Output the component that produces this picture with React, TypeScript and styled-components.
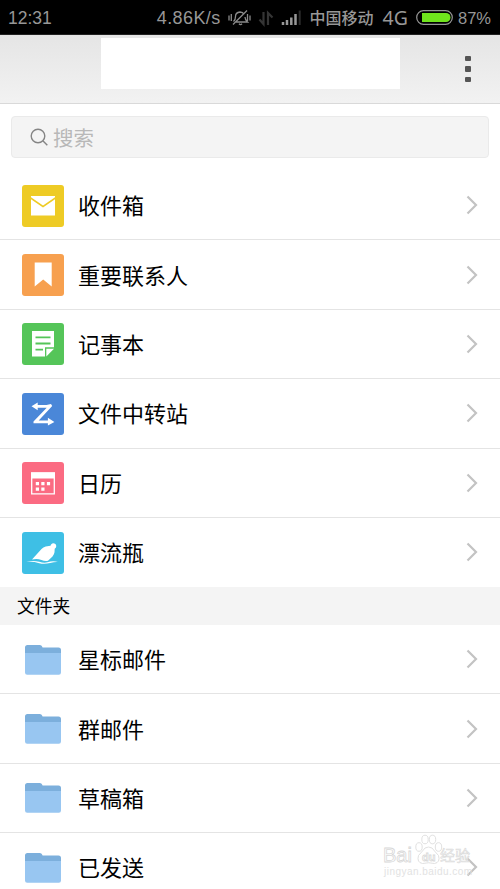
import React from "react";
import styled, { createGlobalStyle } from "styled-components";

const GlobalStyle = createGlobalStyle`
  * { box-sizing: border-box; }
  html, body { margin: 0; padding: 0; background: #fff; }
  body { overflow: hidden; }
`;

const Screen = styled.div`
  position: relative;
  width: 500px;
  height: 889px;
  overflow: hidden;
  background: #fff;
  color: #000;
  font-family: "Liberation Sans", "Noto Sans CJK SC", sans-serif;
`;

const StatusBar = styled.div`
  display: flex;
  align-items: center;
  height: 35px;
  padding: 1px 9px 0 8px;
  background: #000;
  color: #979797;
  border-bottom: 1px solid #222;
`;

const StatusText = styled.span<{ $size: number; $gap?: number; $track?: number; $font?: string }>`
  font-family: ${(p) => p.$font ?? '"Liberation Sans", "Noto Sans CJK SC", sans-serif'};
  font-size: ${(p) => p.$size}px;
  line-height: 34px;
  letter-spacing: ${(p) => p.$track ?? 0}px;
  margin-left: ${(p) => p.$gap ?? 0}px;
  white-space: nowrap;
`;

const Carrier = styled.span`
  margin-top: -2px;
  font: 500 16px/34px "Noto Sans CJK SC", sans-serif;
`;

const StatusGroup = styled.div`
  display: flex;
  align-items: center;
  margin-left: auto;
`;

const StatusIcons = styled.svg`
  display: block;
  width: 74px;
  height: 20px;
  margin: 0 8px 0 7px;
`;

const Battery = styled.svg`
  display: block;
  width: 37px;
  height: 15px;
  margin: 0 5px 0 8px;
`;

const Header = styled.header`
  display: flex;
  align-items: flex-start;
  height: 69px;
  padding: 3px 29px 0 101px;
  background: linear-gradient(#e5e5e5, #f2f2f2);
  border-bottom: 1px solid #d9d9d9;
`;

const TitleBlank = styled.div`
  width: 299px;
  height: 51px;
  background: #fff;
`;

const MenuButton = styled.button`
  display: flex;
  flex-direction: column;
  gap: 5px;
  margin: 17.5px 0 0 auto;
  padding: 0;
  border: 0;
  background: none;
`;

const MenuDot = styled.span`
  width: 6px;
  height: 5.5px;
  border-radius: 1px;
  background: #555;
`;

const SearchBox = styled.div`
  display: flex;
  align-items: center;
  height: 42px;
  margin: 12px 11px 13px;
  padding-left: 18px;
  border: 1px solid #eaeaea;
  border-radius: 4px;
  background: #f4f4f4;
  color: #b8b8b8;
  font: 20.5px/40px "Noto Sans CJK SC", sans-serif;
`;

const SearchIcon = styled.svg`
  width: 18px;
  height: 18px;
  margin-right: 5px;
`;

const Row = styled.div`
  display: flex;
  align-items: center;
  height: 69.4px;
  padding: 0 22px;
  border-bottom: 1px solid #e4e4e4;
  &:last-child { border-bottom-color: transparent; }
`;

const IconTile = styled.svg`
  flex: none;
  width: 42px;
  height: 42px;
  margin-top: 1px;
`;

const Label = styled.span`
  flex: 1;
  margin: -2px 0 0 14px;
  font: 22px/32px "Noto Sans CJK SC", sans-serif;
`;

const Chevron = styled.svg`
  width: 12px;
  height: 20px;
`;

const SectionTitle = styled.div`
  height: 37.6px;
  padding-left: 17px;
  background: #f4f4f4;
  font: 17.8px/36px "Noto Sans CJK SC", sans-serif;
`;

const Watermark = styled.svg`
  position: absolute;
  left: 380px;
  top: 832px;
  width: 96px;
  height: 46px;
`;

const Folder = () => (
  <>
    <path d="M3 8.5a2.5 2.5 0 0 1 2.500-2.500h12.500q2 0 2.600 2.500h15.900a2.500 2.500 0 0 1 2.500 2.500v6H3z" fill="#7cafdc" />
    <path d="M3 14h36v19.500a2.200 2.200 0 0 1-2.200 2.200H5.200A2.200 2.200 0 0 1 3 33.500z" fill="#98c6f1" />
  </>
);

const Tile = ({ color }: { color: string }) => <rect width="42" height="42" rx="3" fill={color} />;

const Mail = () => (
  <>
    <Tile color="#eecb25" />
    <path d="M9 11h24v1.300L21 20.500 9 12.300z" fill="#fff" />
    <path d="M9 14.200l12 8.200 12-8.200V30.500H9z" fill="#fff" />
  </>
);

const Bookmark = () => (
  <>
    <Tile color="#f7a04f" />
    <path d="M12.700 8.500h17V32.500L21.200 25.500 12.700 32.500z" fill="#fff" />
  </>
);

const Note = () => (
  <>
    <Tile color="#55c559" />
    <path d="M10 8h22v16.300h-9V33.500H10z" fill="#fff" />
    <path d="M24.300 25.700H32L24.300 33.500z" fill="#fff" />
    <path d="M13.500 14.300h15M13.500 20.500h15M13.500 26.600h7.500" stroke="#55c559" strokeWidth="1.800" />
  </>
);

const Transfer = () => (
  <>
    <Tile color="#4a87d8" />
    <path d="M9.500 13.200l6.200-3.800v2.500h8.800l4.500-.9 1.200 1.900-13.500 14.500h9.200v-2.600l6.500 4.100-6.500 3.700v-2.400H11.500v-1.800l13.200-13.700h-9v2.500z" fill="#fff" />
  </>
);

const Calendar = () => (
  <>
    <Tile color="#fb6b82" />
    <path d="M9.700 11h22.600v20.800H9.700z" fill="none" stroke="#fff" strokeWidth="1.300" />
    <path d="M9 10.500h24v6H9z" fill="#fff" />
    <path d="M13.800 20h3.200v3.200h-3.200zM19.300 20h3.200v3.200h-3.200zM24.900 20h3.200v3.200h-3.200zM13.800 25.500h3.200v3.200h-3.200zM19.300 25.500h3.200v3.200h-3.200z" fill="#fff" />
  </>
);

const Bottle = () => (
  <>
    <Tile color="#3ebfe5" />
    <path d="M10 27.500L19.500 17q1.800-2 4.200-2.500l4.800-.8a2.900 2.900 0 1 1 4.200 3l-.2 3.500q-.3 2.400-2 4.200l-4.500 4.300q-3.500.6-6.500-.8-4.500-1.700-9.500-.4z" fill="#fff" />
    <path d="M4.200 30q7-2 13-.2t11-.2q4-.7 7.700.4-3.700-.2-7.700 1-6 1.500-11 .2-6-1.800-13-1.200z" fill="#fff" />
  </>
);

const mailboxes = [
  { name: "收件箱", Icon: Mail },
  { name: "重要联系人", Icon: Bookmark },
  { name: "记事本", Icon: Note },
  { name: "文件中转站", Icon: Transfer },
  { name: "日历", Icon: Calendar },
  { name: "漂流瓶", Icon: Bottle },
];

const folders = ["星标邮件", "群邮件", "草稿箱", "已发送"].map((name) => ({ name, Icon: Folder }));

const List = ({ items }: { items: { name: string; Icon: React.FC }[] }) => (
  <div>
    {items.map(({ name, Icon }) => (
      <Row key={name}>
        <IconTile viewBox="0 0 42 42"><Icon /></IconTile>
        <Label>{name}</Label>
        <Chevron viewBox="0 0 12 20" fill="none">
          <path d="M1.500 1.500L10 10l-8.500 8.500" stroke="#c3c3c3" strokeWidth="2.200" />
        </Chevron>
      </Row>
    ))}
  </div>
);

export default function App() {
  return (
    <>
      <GlobalStyle />
      <Screen>
        <StatusBar>
          <StatusText $size={17.5}>12:31</StatusText>
          <StatusGroup>
            <StatusText $size={18} $track={0.4}>4.86K/s</StatusText>
            <StatusIcons viewBox="0 0 74 20" fill="none">
              <path d="M5.500 13.500q2-1.500 2-5 0-4 4.500-4.500 3 .2 4 2.500M17 9q0 3 2.500 5H8M11 15.800q1.500 1.600 3 0M5 16.500L19 2.500M1 7.500v5M3.300 6v7M19.500 6v7M22 7.500v5" stroke="#8b8b8b" strokeWidth="1.300" />
              <path d="M35.500 4v12l-4-4.500M40 17V5l4.500 4.500" stroke="#353535" strokeWidth="2.200" />
              <path d="M55 14v3M59 12v5M63.300 9.500V17M67.500 6v11" stroke="#989898" strokeWidth="2.500" />
              <path d="M71.700 2.500V17" stroke="#2c2c2c" strokeWidth="2" />
            </StatusIcons>
            <Carrier>中国移动</Carrier>
            <StatusText $size={19.5} $gap={9} $font={'"Noto Sans", sans-serif'}>4G</StatusText>
            <Battery viewBox="0 0 37 15">
              <rect x=".7" y=".7" width="35.600" height="13.600" rx="6.800" fill="none" stroke="#979797" strokeWidth="1.200" />
              <path d="M6 3h24a4.500 4.500 0 0 1 0 9H6z" fill="#70e51d" />
            </Battery>
            <StatusText $size={16.5}>87%</StatusText>
          </StatusGroup>
        </StatusBar>
        <Header>
          <TitleBlank />
          <MenuButton aria-label="菜单"><MenuDot /><MenuDot /><MenuDot /></MenuButton>
        </Header>
        <SearchBox>
          <SearchIcon viewBox="0 0 18 18" fill="none" stroke="#858585" strokeWidth="1.400">
            <circle cx="8" cy="8" r="6.800" />
            <path d="M12.800 12.800l4.500 4.500" />
          </SearchIcon>
          搜索
        </SearchBox>
        <List items={mailboxes} />
        <SectionTitle>文件夹</SectionTitle>
        <List items={folders} />
        <Watermark viewBox="0 0 96 46">
          <g fill="#fff" stroke="#d8d8d8" strokeWidth=".8">
            <text x="3" y="30" fontFamily="Liberation Sans" fontWeight="400" fontSize="20">Bai</text>
            <ellipse cx="39" cy="15" rx="3.200" ry="4.300" />
            <ellipse cx="45" cy="7.500" rx="3.200" ry="4.300" />
            <ellipse cx="52.500" cy="7.500" rx="3.200" ry="4.300" />
            <ellipse cx="58.500" cy="15" rx="3.200" ry="4.300" />
            <path d="M48.500 15q4 0 6 4l4 4.500q2 7-4 8-6-1.500-12 0-6-1-4-8l4-4.500q2-4 6-4z" />
            <text x="42" y="29" fontFamily="Liberation Sans" fontWeight="700" fontSize="11">du</text>
            <text x="60" y="29" fontFamily="Noto Sans CJK SC" fontWeight="400" fontSize="15" strokeWidth=".5" fill="#f2f2f2">经验</text>
          </g>
          <text x="4" y="43" fontFamily="Liberation Sans" fontSize="10" fill="#e2e2e2" textLength="88">jingyan.baidu.com</text>
        </Watermark>
      </Screen>
    </>
  );
}
